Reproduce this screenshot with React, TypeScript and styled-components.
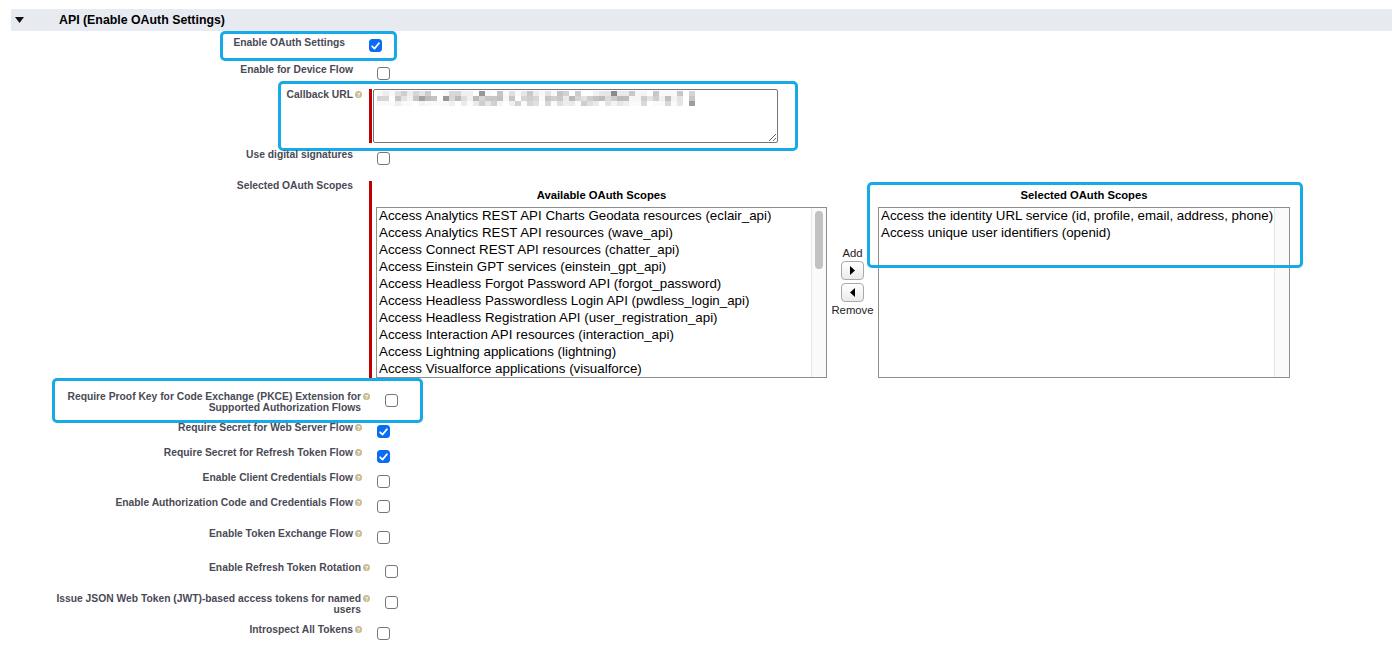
import React, { useMemo } from "react";
import styled, { createGlobalStyle } from "styled-components";

const GlobalStyle = createGlobalStyle`
  html, body { margin: 0; padding: 0; background: #fff; }
  body { font-family: "Liberation Sans", Arial, Helvetica, sans-serif; color: #000; }
`;

const Page = styled.div`
  width: 1392px;
  height: 645px;
  overflow: hidden;
  padding-top: 9px;
  box-sizing: border-box;
`;

const SectionHeader = styled.div`
  margin-left: 11px;
  height: 22px;
  background: #e8eaf1;
  display: flex;
  align-items: center;
  padding-left: 4px;
`;

const HeaderTitle = styled.h3`
  margin: 0 0 0 35px;
  font-size: 12.35px;
  font-weight: bold;
  color: #000;
  line-height: 14px;
`;

const Form = styled.div`
  padding-top: 6px;
`;

const Row = styled.div<{ $shift: number; $pb: number }>`
  position: relative;
  display: grid;
  grid-template-columns: ${(p) => 362 + p.$shift}px 1fr;
  padding-bottom: ${(p) => p.$pb}px;
`;

const LabelCell = styled.div`
  display: flex;
  justify-content: flex-end;
  font-size: 10.3px;
  font-weight: bold;
  line-height: 11px;
  color: #4a4a56;
`;

const LabelText = styled.div`
  max-width: 320px;
  text-align: right;
`;

const HelpSlot = styled.div`
  width: 9px;
  flex: none;
  display: flex;
  justify-content: flex-end;
  padding-top: 2px;
`;

const DataCell = styled.div<{ $pl: number }>`
  padding-left: ${(p) => p.$pl}px;
  display: flex;
  align-items: flex-start;
`;

const Box = styled.span<{ $checked: boolean; $mt: number }>`
  display: inline-flex;
  align-items: center;
  justify-content: center;
  width: 13px;
  height: 13px;
  margin-top: ${(p) => p.$mt}px;
  box-sizing: border-box;
  border-radius: 3px;
  border: 1px solid ${(p) => (p.$checked ? "#0a6cf4" : "#767676")};
  background: ${(p) => (p.$checked ? "#0a6cf4" : "#fff")};
`;

const Highlight = styled.div<{ $l: number; $t: number; $w: number; $h: number }>`
  position: absolute;
  left: ${(p) => p.$l}px;
  top: ${(p) => p.$t}px;
  width: ${(p) => p.$w}px;
  height: ${(p) => p.$h}px;
  box-sizing: border-box;
  border: 3px solid #17a9e8;
  border-radius: 5px;
  pointer-events: none;
`;

const RequiredField = styled.div<{ $gap: number; $mt: number }>`
  display: flex;
  gap: ${(p) => p.$gap}px;
  margin-top: ${(p) => p.$mt}px;
`;

const RequiredBar = styled.div`
  width: 3px;
  flex: none;
  background: #c00000;
`;

const UrlWrap = styled.div`
  position: relative;
`;

const UrlArea = styled.textarea`
  display: block;
  width: 405px;
  height: 54px;
  box-sizing: border-box;
  border: 1px solid #767676;
  border-radius: 2px;
  padding: 0;
  margin: 0;
  resize: both;
  background: #fff;
  outline: none;
`;

const MosaicSvg = styled.svg`
  position: absolute;
  left: 4px;
  top: 2px;
  pointer-events: none;
`;

const Picker = styled.div`
  display: grid;
  grid-template-columns: 451px 51px 412px;
  padding: 7px 0 3px;
`;

const PickerColumn = styled.div`
  display: flex;
  flex-direction: column;
`;

const PickerTitle = styled.div`
  font-size: 11.25px;
  font-weight: bold;
  line-height: 14px;
  text-align: center;
  margin-bottom: 5px;
`;

const ListBox = styled.div`
  position: relative;
  height: 171px;
  box-sizing: border-box;
  border: 1px solid #8e8e8e;
  overflow: hidden;
  background: #fff;
`;

const ListItems = styled.div`
  margin-top: -1px;
`;

const ListItem = styled.div`
  font-size: 13.33px;
  line-height: 17px;
  padding-left: 2px;
  white-space: nowrap;
  color: #000;
`;

const ScrollTrack = styled.div`
  position: absolute;
  top: 0;
  right: 0;
  bottom: 0;
  width: 14px;
  background: #fafafa;
  border-left: 1px solid #e6e6e6;
`;

const ScrollThumb = styled.div`
  position: absolute;
  top: 3px;
  left: 3px;
  width: 8px;
  height: 58px;
  border-radius: 4px;
  background: #c2c2c2;
`;

const MoveColumn = styled.div`
  display: flex;
  flex-direction: column;
  align-items: center;
  padding-top: 59px;
  font-size: 11.3px;
  line-height: 13px;
  color: #222;
`;

const MoveButton = styled.button`
  width: 23px;
  height: 19px;
  margin: 1px 0 2px;
  padding: 0;
  box-sizing: border-box;
  border: 1px solid #a9a9a9;
  border-radius: 4px;
  background: linear-gradient(#ffffff, #ebebeb);
  display: flex;
  align-items: center;
  justify-content: center;
`;

const available = [
  "Access Analytics REST API Charts Geodata resources (eclair_api)",
  "Access Analytics REST API resources (wave_api)",
  "Access Connect REST API resources (chatter_api)",
  "Access Einstein GPT services (einstein_gpt_api)",
  "Access Headless Forgot Password API (forgot_password)",
  "Access Headless Passwordless Login API (pwdless_login_api)",
  "Access Headless Registration API (user_registration_api)",
  "Access Interaction API resources (interaction_api)",
  "Access Lightning applications (lightning)",
  "Access Visualforce applications (visualforce)",
];

const selected = [
  "Access the identity URL service (id, profile, email, address, phone)",
  "Access unique user identifiers (openid)",
];

function HelpIcon() {
  return (
    <svg width="7" height="7" viewBox="0 0 7 7">
      <circle cx="3.5" cy="3.5" r="3.5" fill="#c9b991" />
      <text x="3.5" y="5.8" textAnchor="middle" fontSize="6" fontWeight="bold" fill="#fff" fontFamily="Liberation Sans, Arial, sans-serif">
        ?
      </text>
    </svg>
  );
}

function Checkbox({ checked = false, mt = 3 }: { checked?: boolean; mt?: number }) {
  return (
    <Box $checked={checked} $mt={mt}>
      {checked && (
        <svg width="9" height="8" viewBox="0 0 9 8">
          <path d="M1.2 4.3 L3.5 6.6 L7.9 1.3" fill="none" stroke="#fff" strokeWidth="1.8" strokeLinecap="round" strokeLinejoin="round" />
        </svg>
      )}
    </Box>
  );
}

function Label({ children, help }: { children: React.ReactNode; help?: boolean }) {
  return (
    <LabelCell>
      <LabelText>{children}</LabelText>
      <HelpSlot>{help && <HelpIcon />}</HelpSlot>
    </LabelCell>
  );
}

function Mosaic() {
  const cells = useMemo(() => {
    let s = 987654;
    const rand = () => {
      s = (s * 16807) % 2147483647;
      return (s - 1) / 2147483646;
    };
    const out: { x: number; y: number; c: string }[] = [];
    for (let r = 0; r < 3; r++) {
      for (let c = 0; c < 53; c++) {
        const v = rand();
        if (c > 49 && c !== 50 && c !== 52) continue;
        if (v < 0.08) continue;
        let g = 185 + Math.floor(rand() * 65);
        if (r === 0) g = Math.min(248, g + 10);
        if (r === 2) g = Math.min(250, g + 20);
        if (v > 0.94) g = 135 + Math.floor(rand() * 30);
        out.push({ x: c * 6, y: r * 5, c: `rgb(${g},${g},${g})` });
      }
    }
    return out;
  }, []);
  return (
    <MosaicSvg width="318" height="15" viewBox="0 0 318 15">
      {cells.map((cell, i) => (
        <rect key={i} x={cell.x} y={cell.y} width="6" height="5" fill={cell.c} />
      ))}
    </MosaicSvg>
  );
}

function Triangle({ dir }: { dir: "down" | "right" | "left" }) {
  if (dir === "down")
    return (
      <svg width="9" height="6" viewBox="0 0 9 6">
        <polygon points="0,0 9,0 4.5,6" fill="#111" />
      </svg>
    );
  if (dir === "right")
    return (
      <svg width="5" height="9" viewBox="0 0 5 9">
        <polygon points="0,0 5,4.5 0,9" fill="#000" />
      </svg>
    );
  return (
    <svg width="5" height="9" viewBox="0 0 5 9">
      <polygon points="5,0 0,4.5 5,9" fill="#000" />
    </svg>
  );
}

export default function App() {
  return (
    <>
      <GlobalStyle />
      <Page>
        <SectionHeader>
          <Triangle dir="down" />
          <HeaderTitle>API (Enable OAuth Settings)</HeaderTitle>
        </SectionHeader>
        <Form>
          <Row $shift={-8} $pb={12}>
            <Label>Enable OAuth Settings</Label>
            <DataCell $pl={15}>
              <Checkbox checked mt={2} />
            </DataCell>
            <Highlight $l={220} $t={-6} $w={177} $h={30} />
          </Row>
          <Row $shift={0} $pb={9}>
            <Label>Enable for Device Flow</Label>
            <DataCell $pl={15}>
              <Checkbox />
            </DataCell>
          </Row>
          <Row $shift={0} $pb={6}>
            <Label help>Callback URL</Label>
            <DataCell $pl={7}>
              <RequiredField $gap={1} $mt={0}>
                <RequiredBar />
                <UrlWrap>
                  <UrlArea readOnly aria-label="Callback URL" />
                  <Mosaic />
                </UrlWrap>
              </RequiredField>
            </DataCell>
            <Highlight $l={278} $t={-8} $w={520} $h={70} />
          </Row>
          <Row $shift={0} $pb={15}>
            <Label>Use digital signatures</Label>
            <DataCell $pl={15}>
              <Checkbox />
            </DataCell>
          </Row>
          <Row $shift={0} $pb={10}>
            <Label>Selected OAuth Scopes</Label>
            <DataCell $pl={7}>
              <RequiredField $gap={4} $mt={1}>
                <RequiredBar />
                <Picker>
                  <PickerColumn>
                    <PickerTitle>Available OAuth Scopes</PickerTitle>
                    <ListBox>
                      <ListItems>
                        {available.map((s) => (
                          <ListItem key={s}>{s}</ListItem>
                        ))}
                      </ListItems>
                      <ScrollTrack>
                        <ScrollThumb />
                      </ScrollTrack>
                    </ListBox>
                  </PickerColumn>
                  <MoveColumn>
                    <span>Add</span>
                    <MoveButton aria-label="Add">
                      <Triangle dir="right" />
                    </MoveButton>
                    <MoveButton aria-label="Remove">
                      <Triangle dir="left" />
                    </MoveButton>
                    <span>Remove</span>
                  </MoveColumn>
                  <PickerColumn>
                    <PickerTitle>Selected OAuth Scopes</PickerTitle>
                    <ListBox>
                      <ListItems>
                        {selected.map((s) => (
                          <ListItem key={s}>{s}</ListItem>
                        ))}
                      </ListItems>
                      <ScrollTrack />
                    </ListBox>
                  </PickerColumn>
                </Picker>
              </RequiredField>
            </DataCell>
            <Highlight $l={867} $t={2} $w={436} $h={86} />
          </Row>
          <Row $shift={8} $pb={9}>
            <Label help>Require Proof Key for Code Exchange (PKCE) Extension for Supported Authorization Flows</Label>
            <DataCell $pl={15}>
              <Checkbox />
            </DataCell>
            <Highlight $l={52} $t={-13} $w={371} $h={45} />
          </Row>
          <Row $shift={0} $pb={9}>
            <Label help>Require Secret for Web Server Flow</Label>
            <DataCell $pl={15}>
              <Checkbox checked />
            </DataCell>
          </Row>
          <Row $shift={0} $pb={9}>
            <Label help>Require Secret for Refresh Token Flow</Label>
            <DataCell $pl={15}>
              <Checkbox checked />
            </DataCell>
          </Row>
          <Row $shift={0} $pb={9}>
            <Label help>Enable Client Credentials Flow</Label>
            <DataCell $pl={15}>
              <Checkbox />
            </DataCell>
          </Row>
          <Row $shift={0} $pb={15}>
            <Label help>Enable Authorization Code and Credentials Flow</Label>
            <DataCell $pl={15}>
              <Checkbox />
            </DataCell>
          </Row>
          <Row $shift={0} $pb={18}>
            <Label help>Enable Token Exchange Flow</Label>
            <DataCell $pl={15}>
              <Checkbox />
            </DataCell>
          </Row>
          <Row $shift={8} $pb={15}>
            <Label help>Enable Refresh Token Rotation</Label>
            <DataCell $pl={15}>
              <Checkbox />
            </DataCell>
          </Row>
          <Row $shift={8} $pb={9}>
            <Label help>Issue JSON Web Token (JWT)-based access tokens for named users</Label>
            <DataCell $pl={15}>
              <Checkbox />
            </DataCell>
          </Row>
          <Row $shift={0} $pb={9}>
            <Label help>Introspect All Tokens</Label>
            <DataCell $pl={15}>
              <Checkbox />
            </DataCell>
          </Row>
        </Form>
      </Page>
    </>
  );
}
